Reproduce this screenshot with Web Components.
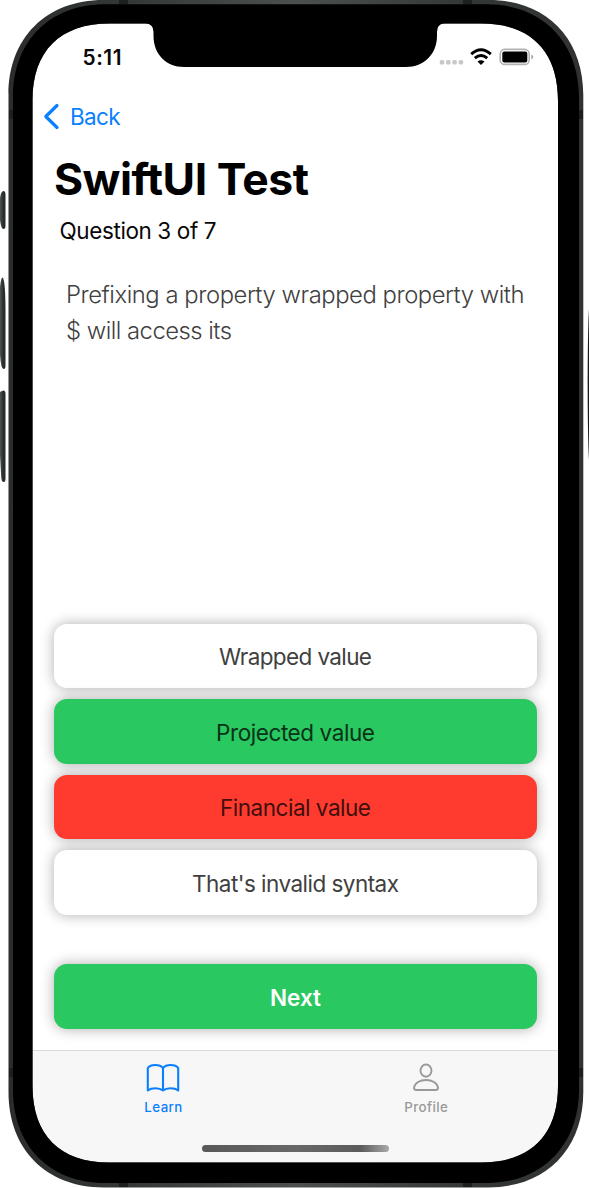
<!DOCTYPE html>
<html lang="en">
<head>
<meta charset="utf-8">
<title>SwiftUI Test</title>
<style>
html,body{margin:0;background:#fff}
body{font-family:Inter,"Liberation Sans",sans-serif;width:589px;height:1188px;overflow:hidden}
</style>
</head>
<body>
<phone-frame>
  <status-bar></status-bar>
  <nav-back><fit-text w="50.5">Back</fit-text></nav-back>
  <quiz-header>
    <fit-text slot="title" w="255">SwiftUI Test</fit-text>
    <fit-text slot="progress" w="157">Question 3 of 7</fit-text>
    <fit-text slot="question" w="458.5">Prefixing a property wrapped property with</fit-text>
    <fit-text slot="question" w="166">$ will access its</fit-text>
  </quiz-header>
  <answer-list>
    <answer-button><fit-text w="153">Wrapped value</fit-text></answer-button>
    <answer-button kind="right"><fit-text w="159">Projected value</fit-text></answer-button>
    <answer-button kind="wrong"><fit-text w="151">Financial value</fit-text></answer-button>
    <answer-button><fit-text w="207">That's invalid syntax</fit-text></answer-button>
    <answer-button kind="next"><fit-text w="51">Next</fit-text></answer-button>
  </answer-list>
  <tab-bar></tab-bar>
</phone-frame>
<script>
const define = (name, html, setup) => customElements.define(name, class extends HTMLElement {
  constructor() {
    super();
    this.attachShadow({ mode: 'open' }).innerHTML = html;
  }
  connectedCallback() { if (setup) setup(this); }
});

define('phone-frame', `
<style>
:host{display:block;position:relative;width:589px;height:1188px}
main{box-sizing:border-box;display:flex;flex-direction:column;margin:0 30.5px 0 32px;padding-top:24px;height:1163px;background:#fff}
svg{position:absolute;left:0;top:0;pointer-events:none}
</style>
<main><slot></slot></main>
<svg width="589" height="1188" viewBox="0 0 589 1188">
  <defs>
    <linearGradient id="edge" x1="0" x2="1"><stop offset="0" stop-color="#2b2d2d"/><stop offset=".2" stop-color="#343737"/><stop offset=".5" stop-color="#4b504f"/><stop offset=".8" stop-color="#343737"/><stop offset="1" stop-color="#303232"/></linearGradient>
    <linearGradient id="key" x1="0" x2="1"><stop offset="0" stop-color="#4b5754"/><stop offset=".6" stop-color="#292d2c"/></linearGradient>
  </defs>
  <path fill="url(#edge)" fill-rule="evenodd" d="M8.500 95C8.500 38 46 0 103.500 0H488.500C546 0 583.300 38 583.300 95V1092C583.300 1149 546 1187.400 488.500 1187.400H103.500C46 1187.400 8.500 1149 8.500 1092Z
   M32.500 100.500V1086C32.500 1135 60 1162.500 109 1162.500H481.500C530.500 1162.500 558 1135 558 1086V100.500C558 51 530.500 23.500 481.500 23.500H109.500C60 23.500 32.500 51 32.500 100.500Z"/>
  <path fill="#000" fill-rule="evenodd" d="M13 97C13 42 49 4.300 105 4.300H487C542 4.300 579 42 579 97V1090C579 1145 542 1183 487 1183H105C49 1183 13 1145 13 1090Z
   M32.500 100.500V1086C32.500 1135 60 1162.500 109 1162.500H481.500C530.500 1162.500 558 1135 558 1086V100.500C558 51 530.500 23.500 481.500 23.500H444Q437 24 437 32V36C437 54 424 67 406 67H184C166 67 153.500 54 153.500 36V32Q153.500 24 146 23.500H109.500C60 23.500 32.500 51 32.500 100.500Z"/>
  <path fill="#1d1f1f" d="M119 0h9v4h-9zM463 0h9v4h-9zM119 1183h9v4h-9zM463 1183h9v4h-9zM9 110h4v9H9zM579 110h4v9H579zM9 1068h4v9H9zM579 1068h4v9H579z"/>
  <g fill="url(#key)">
    <path d="M0 198Q1 191 3.500 191Q5.500 191 5.500 195V226Q5.500 229 3.500 229Q1 229 0 220Z"/>
    <path d="M0 287Q1 277.500 2.500 277.500Q5.500 280 5.500 312V366Q5.500 369 3.500 369Q1 369 0 355Z"/>
    <path d="M0 392Q1 391 3.500 390.500Q5.500 390.500 5.500 394V479Q5.500 482 3.500 482Q1.500 482 1.200 477L0 455Z"/>
  </g>
  <path fill="#1a1a1a" d="M589 309C587.200 335 587.200 433 589 460Z"/>
</svg>`);

// Adjusts tracking so that a single line of text takes the width given in "w".
define('fit-text', `<style>:host{display:inline-block;white-space:nowrap}</style><span><slot></slot></span>`, el => {
  requestAnimationFrame(() => {
    const span = el.shadowRoot.querySelector('span');
    const count = el.textContent.length;
    const gap = (el.getAttribute('w') - span.getBoundingClientRect().width) / (count - 1);
    span.style.letterSpacing = gap + 'px';
    span.style.marginRight = -gap + 'px';
  });
});

define('status-bar', `
<style>
:host{display:flex;justify-content:space-between;align-items:center;height:66px;box-sizing:border-box;padding:0 25px 0 50.500px}
fit-text{font-size:20.800px;font-weight:600;color:#080808}
svg{display:block}
</style>
<fit-text w="39">5:11</fit-text>
<svg width="96" height="20" viewBox="0 0 96 20">
  <g fill="#c9c9cb"><rect x="1.700" y="13" width="4.600" height="4.600" rx="1.600"/><rect x="8" y="13" width="4.600" height="4.600" rx="1.600"/><rect x="14.300" y="13" width="4.600" height="4.600" rx="1.600"/><rect x="20.600" y="13" width="4.600" height="4.600" rx="1.600"/></g>
  <g fill="none" stroke="#000" stroke-width="2.900"><path d="M33.200 7.200Q43 -1.500 52.800 7.200"/><path d="M36.800 11.200Q43 5.800 49.200 11.200"/></g>
  <path d="M39.500 14.600Q43 11.800 46.500 14.600L43 18Z"/>
  <rect x="62.200" y="2.400" width="29" height="15" rx="4.500" fill="none" stroke="#b2b2b2" stroke-width="1.600"/>
  <rect x="64.300" y="4.400" width="25" height="11" rx="2"/>
  <path fill="#a9a9a9" d="M93.300 7.500Q95.300 8.200 95.300 9.900Q95.300 11.700 93.300 12.400Z"/>
</svg>`);

define('nav-back', `
<style>
:host{display:flex;align-items:center;height:53px;padding-left:11px;gap:10px;color:#0a7fff;font-size:22.500px}
svg{display:block}
</style>
<svg width="17" height="27" viewBox="0 0 17 27"><path fill="none" stroke="#0a7fff" stroke-width="3.200" stroke-linecap="round" stroke-linejoin="round" d="M14 2.500L2.800 13.500L14 24.500"/></svg>
<slot></slot>`);

define('quiz-header', `
<style>
:host{display:flex;flex-direction:column;align-items:flex-start;height:472px;padding-left:22px}
.title{height:73px;line-height:73px;font-size:44.500px;font-weight:700;color:#000}
.progress{height:30px;line-height:30px;font-size:22.500px;padding-left:5.500px;color:#080808}
.question{display:flex;flex-direction:column;align-items:flex-start;line-height:36.400px;font-size:23.800px;font-weight:300;color:#404040;padding:30.500px 0 0 12px}
</style>
<div class="title"><slot name="title"></slot></div>
<div class="progress"><slot name="progress"></slot></div>
<div class="question"><slot name="question"></slot></div>`);

define('answer-list', `
<style>:host{display:flex;flex-direction:column;gap:11px;height:435px;box-sizing:border-box;padding:8.500px 21.500px 0 22px}
::slotted(:last-child){margin-top:38.500px}</style>
<slot></slot>`);

define('answer-button', `
<style>
:host{display:flex;align-items:center;justify-content:center;height:64.500px;flex:none;border-radius:13px;background:#fff;color:#404040;font-size:22.500px;box-shadow:0 0 14px rgba(0,0,0,.32)}
:host([kind=right]){background:#29c860;color:#0a3218}
:host([kind=wrong]){background:#ff3b30;color:#400f0c}
:host([kind=next]){background:#29c860;color:#fff;font-weight:600}
::slotted(*){padding-top:1.500px}
</style>
<slot></slot>`);

define('tab-bar', `
<style>
:host{display:flex;flex-direction:column;flex:1;background:#f7f7f7;border-top:1px solid #dadada}
.tabs{display:grid;grid-template-columns:1fr 1fr;height:65px;margin-right:1px}
.tab{display:flex;flex-direction:column;align-items:center;color:#999;font-size:13.300px;font-weight:550}
.tab.on{color:#0a7fff}
.tab svg{display:block;margin-top:11px;height:32px}
.tab fit-text{line-height:16px;margin-top:5px}
.home{width:187px;height:7px;margin:29px auto 0;border-radius:4px;background:linear-gradient(90deg,#585858,#686868 50%,#5b5b5b 85%,#aaa)}
</style>
<div class="tabs">
  <div class="tab on">
    <svg width="34" height="32" viewBox="0 0 34 32" fill="none" stroke="#0a7fff" stroke-width="2.100" stroke-linecap="round" stroke-linejoin="round"><path d="M17 6C14 2 4.500 2 1.800 6V28.500C5.500 25.500 13.500 25.500 17 28.500C20.500 25.500 28.500 25.500 32.200 28.500V6C29.500 2 20 2 17 6V28.500"/></svg>
    <fit-text w="38">Learn</fit-text>
  </div>
  <div class="tab">
    <svg width="28" height="32" viewBox="0 0 28 32" fill="none" stroke="#999" stroke-width="1.900" stroke-linejoin="round"><ellipse cx="14" cy="8.600" rx="5.500" ry="6.100"/><path d="M4.500 28H23.500Q26 28 26 25.700C25.200 20.700 20 18 14 18S2.800 20.700 2 25.700Q2 28 4.500 28Z"/></svg>
    <fit-text w="43.5">Profile</fit-text>
  </div>
</div>
<div class="home"></div>`);
</script>
</body>
</html>
